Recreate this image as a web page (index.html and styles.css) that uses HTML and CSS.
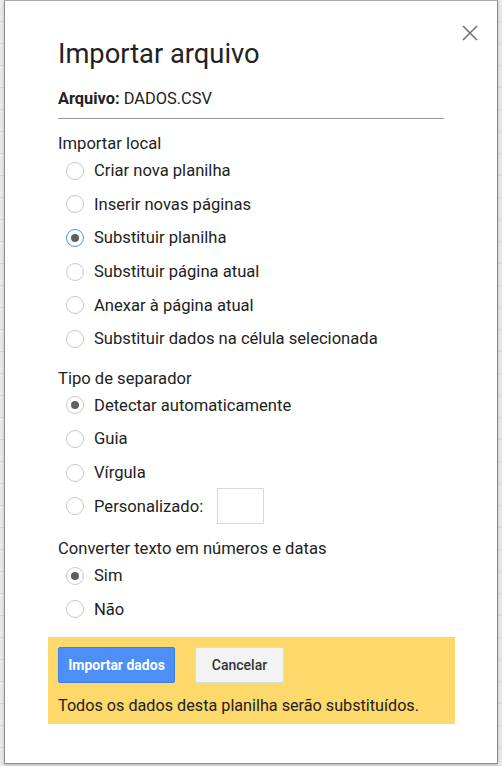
FILE: index.html
```html
<!DOCTYPE html>
<html>
<head>
    <title>Importar arquivo</title>
    <link rel="stylesheet" href="styles.css">
</head>
<body>
    <div class="dialog">
        <button class="close-btn" aria-label="Fechar">
            <svg width="16" height="16" viewBox="0 0 16 16">
                <path d="M1 1 L15 15 M15 1 L1 15" stroke="#737373" stroke-width="1.6" fill="none"/>
            </svg>
        </button>

        <h1>Importar arquivo</h1>

        <div class="file-name"><b>Arquivo:</b> DADOS.CSV</div>

        <div class="section">
            <div class="section-title">Importar local</div>
            <label class="radio-row"><span class="radio"></span>Criar nova planilha</label>
            <label class="radio-row"><span class="radio"></span>Inserir novas páginas</label>
            <label class="radio-row"><span class="radio checked focused"></span>Substituir planilha</label>
            <label class="radio-row"><span class="radio"></span>Substituir página atual</label>
            <label class="radio-row"><span class="radio"></span>Anexar à página atual</label>
            <label class="radio-row"><span class="radio"></span>Substituir dados na célula selecionada</label>
        </div>

        <div class="section sep-section">
            <div class="section-title">Tipo de separador</div>
            <label class="radio-row"><span class="radio checked"></span>Detectar automaticamente</label>
            <label class="radio-row"><span class="radio"></span>Guia</label>
            <label class="radio-row"><span class="radio"></span>Vírgula</label>
            <label class="radio-row"><span class="radio"></span>Personalizado:<span class="sep-input"></span></label>
        </div>

        <div class="section convert-section">
            <div class="section-title">Converter texto em números e datas</div>
            <label class="radio-row"><span class="radio checked"></span>Sim</label>
            <label class="radio-row"><span class="radio"></span>Não</label>
        </div>

        <div class="warning-box">
            <div class="buttons">
                <button class="btn btn-primary">Importar dados</button>
                <button class="btn">Cancelar</button>
            </div>
            <div class="warning-text">Todos os dados desta planilha serão substituídos.</div>
        </div>
    </div>
</body>
</html>
```

FILE: styles.css
```css
html, body {
    margin: 0;
    height: 100%;
}

body {
    font-family: Roboto, Arial, sans-serif;
    color: #222;
    background-color: #ececec;
    background-image: repeating-linear-gradient(to bottom, transparent 0, transparent 21px, #d9d9d9 21px, #d9d9d9 22px);
    padding: 0 4px;
    overflow: hidden;
}

.dialog {
    position: relative;
    box-sizing: border-box;
    width: 494px;
    height: 764px;
    background-color: #fff;
    border: 1px solid #8c8c8c;
    border-top-color: #aaa;
    box-shadow: 0 2px 4px rgba(0, 0, 0, 0.2);
    padding: 0 0 0 53px;
}

.close-btn {
    position: absolute;
    top: 24px;
    right: 19px;
    background: none;
    border: none;
    padding: 0;
    cursor: pointer;
    line-height: 0;
}

h1 {
    margin: 0;
    padding-top: 35px;
    font-size: 27.3px;
    font-weight: 400;
    line-height: 36px;
    color: #222;
}

.file-name {
    margin-top: 17px;
    width: 386px;
    font-size: 16.4px;
    line-height: 20px;
    padding-bottom: 9px;
    border-bottom: 1px solid #999;
}

.file-name b {
    font-weight: 700;
}

.section {
    margin-top: 15px;
}

.sep-section {
    margin-top: 13px;
}

.convert-section {
    margin-top: 16px;
}

.section-title {
    font-size: 16.6px;
    line-height: 20px;
}

.radio-row {
    display: flex;
    align-items: center;
    height: 33.6px;
    padding-left: 8px;
    font-size: 16.6px;
    color: #222;
}

.radio {
    box-sizing: border-box;
    width: 18px;
    height: 18px;
    border: 1px solid #c8c8c8;
    border-radius: 50%;
    margin-right: 10px;
    display: flex;
    align-items: center;
    justify-content: center;
}

.radio.checked::after {
    content: "";
    width: 8px;
    height: 8px;
    border-radius: 50%;
    background-color: #606060;
}

.radio.focused {
    border-color: #4d90fe;
}

.sep-input {
    box-sizing: border-box;
    width: 47px;
    height: 36px;
    border: 1px solid #d9d9d9;
    margin-left: 14px;
}

.warning-box {
    margin: 11px 0 0 -10px;
    width: 407px;
    height: 87px;
    box-sizing: border-box;
    background-color: #fdd86b;
    padding: 10px 10px 0 10px;
}

.buttons {
    display: flex;
    gap: 20px;
}

.btn {
    height: 36px;
    padding: 0;
    font-family: Roboto, Arial, sans-serif;
    font-size: 14px;
    font-weight: 500;
    color: #333;
    background-color: #f3f3f3;
    border: 1px solid #dcdcdc;
    border-radius: 2px;
    cursor: pointer;
}

.btn-primary {
    width: 117px;
    font-weight: 700;
    color: #fff;
    background-color: #4d8ff7;
    border-color: #3b7fe8;
}

.btn:not(.btn-primary) {
    width: 89px;
}

.warning-text {
    margin-top: 12px;
    font-size: 16.2px;
    line-height: 22px;
    color: #222;
}
```
